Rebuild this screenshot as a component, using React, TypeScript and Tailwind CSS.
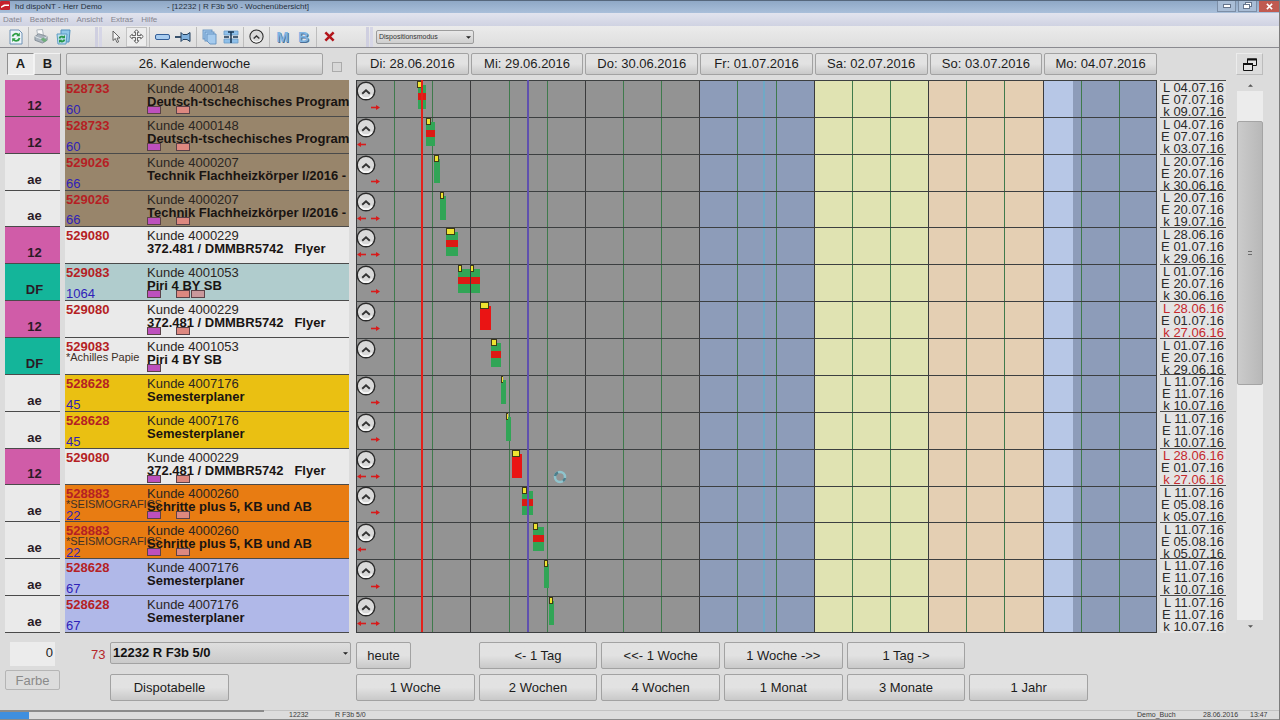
import type { ReactNode } from "react";
import clsx from "clsx";

type Bar = {
	x: number;
	w: number;
	flags: [number, number][];
	kind: "run" | "mixed" | "late";
};

type Job = {
	code: string;
	codeBg: string;
	bg: string;
	order: string;
	note?: string;
	count?: string;
	customer: string;
	title: string;
	swatches: string[];
	left?: boolean;
	right?: boolean;
	dates: [string, string, string];
	late?: boolean;
	bar: Bar;
};

const PINK = "bg-[#d05ca8]";
const TEAL = "bg-[#14b59a]";
const LIGHT = "bg-[#eaeaea]";
const BROWN = "bg-[#98856b]";
const YELLOW = "bg-[#eac012]";
const ORANGE = "bg-[#e87c12]";
const LILAC = "bg-[#b0b8e8]";

const VIOLET = "bg-[#bd50bd]";
const SALMON = "bg-[#dd8880]";
const ROSE = "bg-[#c9989c]";

const jobs: Job[] = [
	{ code: "12", codeBg: PINK, bg: BROWN, order: "528733", count: "60", customer: "Kunde 4000148", title: "Deutsch-tschechisches Program", swatches: [VIOLET, SALMON], right: true, dates: ["04.07.16", "07.07.16", "09.07.16"], bar: { x: 62, w: 8, flags: [[61, 5]], kind: "mixed" } },
	{ code: "12", codeBg: PINK, bg: BROWN, order: "528733", count: "60", customer: "Kunde 4000148", title: "Deutsch-tschechisches Program", swatches: [VIOLET, SALMON], left: true, dates: ["04.07.16", "07.07.16", "03.07.16"], bar: { x: 70, w: 9, flags: [[70, 5]], kind: "mixed" } },
	{ code: "ae", codeBg: LIGHT, bg: BROWN, order: "529026", count: "66", customer: "Kunde 4000207", title: "Technik Flachheizkörper I/2016 -", swatches: [], right: true, dates: ["20.07.16", "20.07.16", "30.06.16"], bar: { x: 78, w: 6, flags: [[78, 5]], kind: "run" } },
	{ code: "ae", codeBg: LIGHT, bg: BROWN, order: "529026", count: "66", customer: "Kunde 4000207", title: "Technik Flachheizkörper I/2016 -", swatches: [VIOLET, SALMON], left: true, right: true, dates: ["20.07.16", "20.07.16", "19.07.16"], bar: { x: 84, w: 6, flags: [[84, 4]], kind: "run" } },
	{ code: "12", codeBg: PINK, bg: LIGHT, order: "529080", customer: "Kunde 4000229", title: "372.481 / DMMBR5742   Flyer", swatches: [], left: true, right: true, dates: ["28.06.16", "01.07.16", "29.06.16"], bar: { x: 90, w: 12, flags: [[90, 9]], kind: "mixed" } },
	{ code: "DF", codeBg: TEAL, bg: "bg-[#b0cccd]", order: "529083", count: "1064", customer: "Kunde 4001053", title: "Piri 4 BY SB", swatches: [VIOLET, SALMON, ROSE], right: true, dates: ["01.07.16", "20.07.16", "30.06.16"], bar: { x: 102, w: 22, flags: [[102, 4], [114, 4]], kind: "mixed" } },
	{ code: "12", codeBg: PINK, bg: LIGHT, order: "529080", customer: "Kunde 4000229", title: "372.481 / DMMBR5742   Flyer", swatches: [VIOLET, SALMON], right: true, late: true, dates: ["28.06.16", "01.07.16", "27.06.16"], bar: { x: 124, w: 11, flags: [[124, 9]], kind: "late" } },
	{ code: "DF", codeBg: TEAL, bg: LIGHT, order: "529083", note: "*Achilles Papie", customer: "Kunde 4001053", title: "Piri 4 BY SB", swatches: [VIOLET], dates: ["01.07.16", "20.07.16", "29.06.16"], bar: { x: 135, w: 10, flags: [[135, 6]], kind: "mixed" } },
	{ code: "ae", codeBg: LIGHT, bg: YELLOW, order: "528628", count: "45", customer: "Kunde 4007176", title: "Semesterplaner", swatches: [], right: true, dates: ["11.07.16", "11.07.16", "10.07.16"], bar: { x: 145, w: 5, flags: [[145, 2]], kind: "run" } },
	{ code: "ae", codeBg: LIGHT, bg: YELLOW, order: "528628", count: "45", customer: "Kunde 4007176", title: "Semesterplaner", swatches: [], right: true, dates: ["11.07.16", "11.07.16", "10.07.16"], bar: { x: 150, w: 5, flags: [[150, 2]], kind: "run" } },
	{ code: "12", codeBg: PINK, bg: LIGHT, order: "529080", customer: "Kunde 4000229", title: "372.481 / DMMBR5742   Flyer", swatches: [VIOLET, SALMON], left: true, right: true, late: true, dates: ["28.06.16", "01.07.16", "27.06.16"], bar: { x: 156, w: 10, flags: [[156, 8]], kind: "late" } },
	{ code: "ae", codeBg: LIGHT, bg: ORANGE, order: "528883", note: "*SEISMOGRAFICS", count: "22", customer: "Kunde 4000260", title: "Schritte plus 5, KB und AB", swatches: [VIOLET, SALMON], right: true, dates: ["11.07.16", "05.08.16", "05.07.16"], bar: { x: 166, w: 11, flags: [[166, 5]], kind: "mixed" } },
	{ code: "ae", codeBg: LIGHT, bg: ORANGE, order: "528883", note: "*SEISMOGRAFICS", count: "22", customer: "Kunde 4000260", title: "Schritte plus 5, KB und AB", swatches: [VIOLET, SALMON], left: true, dates: ["11.07.16", "05.08.16", "05.07.16"], bar: { x: 177, w: 11, flags: [[177, 5]], kind: "mixed" } },
	{ code: "ae", codeBg: LIGHT, bg: LILAC, order: "528628", count: "67", customer: "Kunde 4007176", title: "Semesterplaner", swatches: [], right: true, dates: ["11.07.16", "11.07.16", "10.07.16"], bar: { x: 188, w: 5, flags: [[188, 4]], kind: "run" } },
	{ code: "ae", codeBg: LIGHT, bg: LILAC, order: "528628", count: "67", customer: "Kunde 4007176", title: "Semesterplaner", swatches: [], left: true, right: true, dates: ["11.07.16", "11.07.16", "10.07.16"], bar: { x: 193, w: 5, flags: [[193, 4]], kind: "run" } },
];

const days = ["Di: 28.06.2016", "Mi: 29.06.2016", "Do: 30.06.2016", "Fr: 01.07.2016", "Sa: 02.07.2016", "So: 03.07.2016", "Mo: 04.07.2016"];
const dayColors = ["#939393", "#939393", "#939393", "#8d9cb9", "#e0e3b2", "#e4cfb3", "#8d9cb9"];

const CHART_W = 801;
const CHART_H = 553;
const DAY_W = CHART_W / 7;
const ROW_H = CHART_H / jobs.length;

function PushButton({ children, className }: { children: ReactNode; className?: string }) {
	return (
		<button
			type="button"
			className={clsx(
				"flex items-center justify-center rounded-xs border border-[#a2a2a2] bg-linear-to-b from-[#e2e2e2] from-50% to-[#c9c9c9] whitespace-nowrap",
				className
			)}
		>
			{children}
		</button>
	);
}

function ToolButton({ label, pressed, children }: { label: string; pressed?: boolean; children: ReactNode }) {
	return (
		<button
			type="button"
			aria-label={label}
			className={clsx(
				"flex h-5 w-[21px] shrink-0 items-center justify-center",
				pressed && "border border-[#c4c4c4] bg-[#ededed]"
			)}
		>
			{children}
		</button>
	);
}

function Separator() {
	return (
		<div className="flex w-[5px] shrink-0 justify-center">
			<div className="h-5 w-px bg-[#bdbdbd]" />
		</div>
	);
}

function Grip() {
	return (
		<div className="flex h-5 w-[10px] shrink-0 gap-px">
			<div className="w-[3px] bg-[#cfcfe0]" />
			<div className="w-[3px] bg-[#d6d6e6]" />
		</div>
	);
}

function ClockIcon({ size }: { size: string }) {
	return (
		<svg viewBox="0 0 20 20" className={size} fill="none">
			<circle cx="10" cy="10" r="8.800" fill="#d9d9d9" stroke="#2b2b2b" strokeWidth="1.400" />
			<path d="M4 14a7.200 7.200 0 0 0 12 0" stroke="#f6f6f6" strokeWidth="1.800" />
			<path d="M6.200 12.800 10 9.300l3.800 3.500" stroke="#333" strokeWidth="1.900" />
		</svg>
	);
}

function TitleBar() {
	return (
		<header className="flex h-[13px] items-start border-t border-[#56677c] bg-linear-to-b from-[#8fa8c6] to-[#a9bfda] text-[8px] leading-[11px] text-[#26303c]">
			<svg viewBox="0 0 10 10" className="mr-[5px] size-[10px]">
				<rect width="10" height="9" rx="1" fill="#c5202c" />
				<path d="M1 5.500 4 3.500h5v1.500H5L1 7z" fill="#fff" />
			</svg>
			<span className="w-[152px]">hd dispoNT - Herr Demo</span>
			<span className="flex-1">- [12232 | R F3b 5/0 - Wochenübersicht]</span>
			<div className="flex gap-0.5">
				<button type="button" aria-label="Minimieren" className="flex h-[11px] w-[19px] items-center justify-center border border-t-0 border-[#7c8ea6] bg-[#a9bdd6]">
					<svg viewBox="0 0 8 4" className="h-1 w-2">
						<rect x=".5" y=".5" width="7" height="3" fill="#fff" stroke="#66758c" />
					</svg>
				</button>
				<button type="button" aria-label="Wiederherstellen" className="flex h-[11px] w-[19px] items-center justify-center border border-t-0 border-[#7c8ea6] bg-[#a9bdd6]">
					<svg viewBox="0 0 9 8" className="h-2 w-[9px]" fill="#fff" stroke="#66758c">
						<rect x="2.500" y=".5" width="6" height="4" />
						<rect x=".5" y="2.500" width="6" height="4" />
					</svg>
				</button>
				<button type="button" aria-label="Schließen" className="flex h-[11px] w-5 items-center justify-center bg-[#c05a50]">
					<svg viewBox="0 0 8 8" className="size-[7px]" stroke="#fff" strokeWidth="1.800">
						<path d="m1 1 6 6M7 1 1 7" />
					</svg>
				</button>
			</div>
		</header>
	);
}

function Toolbar() {
	return (
		<div className="flex h-[22px] items-center border-b border-[#8a8a90] bg-linear-to-b from-[#ebebeb] to-[#dedede] pl-[5px]">
			<ToolButton label="Aktualisieren">
				<svg viewBox="0 0 14 16" className="h-4 w-[14px]" fill="none">
					<path d="M1 1h9l3 3v11H1z" fill="#eef4fa" stroke="#6f92b5" />
					<path d="M3.500 7.500c.6-3 4.200-3.800 6-1.500" stroke="#2e9e44" strokeWidth="1.800" />
					<path d="M10.800 3.500v3.700H7.200z" fill="#2e9e44" />
					<path d="M10.500 9c-.6 3-4.200 3.800-6 1.500" stroke="#2e9e44" strokeWidth="1.800" />
					<path d="M3.200 13V9.300h3.600z" fill="#2e9e44" />
				</svg>
			</ToolButton>
			<Separator />
			<ToolButton label="Drucken">
				<svg viewBox="0 0 16 16" className="size-[15px]">
					<path d="m3 1 6-.5 1 6-6 .5z" fill="#fafafa" stroke="#9aa4ae" strokeWidth=".8" />
					<path d="m1 8 4-3 9 3v4l-5 3-8-3z" fill="#a9b3bd" stroke="#76808a" strokeWidth=".8" />
					<path d="m1 8 8 3 5-3" fill="none" stroke="#dfe5ea" />
					<path d="m7 11 3-2 4 3-3 2z" fill="#6fae7c" />
				</svg>
			</ToolButton>
			<ToolButton label="Druckvorschau">
				<svg viewBox="0 0 16 16" className="size-4" fill="none">
					<path d="M6 1h9l-1 12h-3V8H6z" fill="#8fc7e8" stroke="#4e8fbb" />
					<path d="M2 5h10l-1 10H3z" fill="#bfe0ee" stroke="#5c9cc4" />
					<path d="M4.500 9.500c.5-2 3-2.500 4.300-1M9.500 10.500c-.6 2.200-3 2.600-4.400 1" stroke="#27984a" strokeWidth="1.900" />
					<path d="M10 6v3.200H6.800zM4 14v-3.200h3.200z" fill="#27984a" />
				</svg>
			</ToolButton>
			<div className="w-[22px]" />
			<Grip />
			<ToolButton label="Auswahl">
				<svg viewBox="0 0 10 14" className="h-[14px] w-[10px]">
					<path d="M2 1v9.500l2.300-2 1.700 4 1.600-.7L6 8h3z" fill="#f5f5f5" stroke="#555" strokeWidth=".9" />
				</svg>
			</ToolButton>
			<ToolButton label="Verschieben" pressed>
				<svg viewBox="0 0 16 16" className="size-[15px] shrink-0">
					<path
						d="m8 .8 2.500 2.700H9v3.500h3.500V5.500L15.200 8l-2.700 2.500V9H9v3.500h1.500L8 15.200l-2.500-2.700H7V9H3.500v1.500L.8 8l2.700-2.500V7H7V3.500H5.500z"
						fill="#fff"
						stroke="#444"
						strokeWidth=".9"
					/>
				</svg>
			</ToolButton>
			<Separator />
			<ToolButton label="Balken">
				<svg viewBox="0 0 15 6" className="h-1.5 w-[15px]">
					<rect x=".5" y=".5" width="14" height="5" rx="1.500" fill="#a9cdf0" stroke="#345f98" />
				</svg>
			</ToolButton>
			<ToolButton label="Fixieren">
				<svg viewBox="0 0 17 12" className="h-3 w-[17px]" stroke="#24405e">
					<path d="M0 6h6" strokeWidth="1.800" />
					<path d="M6 1.500v9l2-2h4l3 2v-9l-3 2H8z" fill="#7fb0dc" />
				</svg>
			</ToolButton>
			<Separator />
			<ToolButton label="Kopieren">
				<svg viewBox="0 0 16 16" className="size-4" fill="#a5cbee" stroke="#6391c0" strokeWidth=".9">
					<rect x="1" y="1" width="9" height="9" />
					<rect x="3" y="3" width="9" height="9" />
					<path d="M5 5h9v10H8l-3-3z" />
				</svg>
			</ToolButton>
			<ToolButton label="Teilen">
				<svg viewBox="0 0 16 14" className="h-[14px] w-4">
					<path d="M1 1h14v4H1zM1 9h14v4H1z" fill="#8fc0ea" stroke="#6a9cc9" strokeWidth=".8" />
					<path d="M8 2v11M1 7h5M15 7h-5M5 2h6" stroke="#173452" strokeWidth="1.500" />
				</svg>
			</ToolButton>
			<Separator />
			<ToolButton label="Uhrzeit">
				<ClockIcon size="size-[15px]" />
			</ToolButton>
			<Separator />
			<ToolButton label="Maschine">
				<span className="text-[15px] leading-none font-bold text-[#7eb4e2] text-shadow-[1px_1px_0_#4a6f96]">M</span>
			</ToolButton>
			<ToolButton label="Belegung">
				<span className="text-[15px] leading-none font-bold text-[#7eb4e2] text-shadow-[1px_1px_0_#4a6f96]">B</span>
			</ToolButton>
			<Separator />
			<ToolButton label="Löschen">
				<svg viewBox="0 0 12 12" className="size-[11px]" stroke="#b3161c" strokeWidth="2.800">
					<path d="m1.500 1.500 9 9M10.500 1.500l-9 9" />
				</svg>
			</ToolButton>
			<div className="w-[26px]" />
			<Grip />
			<div className="relative">
				<select
					aria-label="Modus"
					className="block h-[14px] w-[98px] appearance-none rounded-xs border border-[#9c9c9c] bg-linear-to-b from-[#e8e8e8] to-[#cfcfcf] pl-0.5 text-[7px] leading-3 text-[#333]"
				>
					<option>Dispositionsmodus</option>
				</select>
				<svg viewBox="0 0 6 3" className="pointer-events-none absolute top-[6px] right-[3px] h-[3px] w-[5px]">
					<path d="M0 0h6L3 3z" fill="#222" />
				</svg>
			</div>
		</div>
	);
}

function HeaderRow() {
	return (
		<div className="flex h-8 items-center pr-4 pl-[7px]">
			<div className="flex h-[22px] w-[59px] shrink-0 font-bold">
				<button type="button" className="w-[27px] border border-[#8f8f8f] border-r-[#f4f4f4] border-b-[#f4f4f4] bg-[#ebebeb]">
					A
				</button>
				<button type="button" className="w-[27px] border border-[#f2f2f2] border-r-[#8f8f8f] border-b-[#8f8f8f] bg-[#dcdcdc]">
					B
				</button>
			</div>
			<PushButton className="h-[22px] w-[257px] shrink-0">26. Kalenderwoche</PushButton>
			<div className="flex w-[33px] shrink-0 items-center pt-1.5 pl-[9px]">
				<input type="checkbox" aria-label="Woche fixieren" className="size-[10px] appearance-none border border-[#ababab] bg-[#d8d8d8]" />
			</div>
			<div className="grid min-w-0 flex-1 grid-cols-7 gap-0.5">
				{days.map((day) => (
					<PushButton key={day} className="h-[22px]">
						{day}
					</PushButton>
				))}
			</div>
			<div className="flex w-[106px] shrink-0 justify-end">
				<button type="button" aria-label="Fenster" className="flex h-[22px] w-[27px] items-center justify-center border border-[#ececec] border-r-[#bcbcbc] border-b-[#bcbcbc]">
					<svg viewBox="0 0 14 13" className="h-[13px] w-[14px]" fill="#e4e4e4" stroke="#111">
						<path d="M4.500 1h9v6.500h-9z" />
						<path d="M4 1.500h10" strokeWidth="2" />
						<path d="M.5 6h9v6.500h-9z" />
						<path d="M0 6h10" strokeWidth="2" />
					</svg>
				</button>
			</div>
		</div>
	);
}

function JobRow({ job }: { job: Job }) {
	return (
		<div className={clsx("flex min-h-0 flex-1 basis-0 border-b border-[#4a4a4a] pl-px leading-[13px] whitespace-pre", job.bg)}>
			<div className="flex w-[81px] shrink-0 flex-col pt-0.5">
				<span className="font-bold text-[#b51f24]">{job.order}</span>
				<span className="h-[9px] text-[11px] leading-[9px] text-[#3d3028]">{job.note}</span>
				<span className="text-[#2f22b8]">{job.count}</span>
			</div>
			<div className="min-w-0 flex-1 pt-0.5">
				<div className="text-[#2a2522]">{job.customer}</div>
				<div className="font-bold text-[#191412]">{job.title}</div>
				<div className="-mt-0.5 flex">
					{job.swatches.map((color, i) => (
						<div key={i} className={clsx("h-2 w-[14px] border border-[#5b4248]", color, i === 1 && "ml-[15px]", i === 2 && "ml-px")} />
					))}
				</div>
			</div>
		</div>
	);
}

function Arrow({ flip }: { flip?: boolean }) {
	return (
		<svg viewBox="0 0 9 5" className={clsx("h-[5px] w-[9px]", flip && "rotate-180")}>
			<path d="M0 2.500h6" stroke="#d81b1b" strokeWidth="1.600" />
			<path d="M5 0v5l4-2.500z" fill="#d81b1b" />
		</svg>
	);
}

function Bars() {
	return (
		<>
			{jobs.map(({ bar }, i) => {
				const y = Math.round(i * ROW_H);
				return (
					<g key={i}>
						<rect x={bar.x} y={y + 5} width={bar.w} height={24} fill={bar.kind === "late" ? "#ea1414" : "#31a556"} />
						{bar.kind === "mixed" && <rect x={bar.x} y={y + 13} width={bar.w} height={7} fill="#dc1a14" />}
						{bar.flags.map(([x, w]) => (
							<g key={x}>
								<rect x={x} y={y + 1} width={w} height={7} fill="#3f3b18" />
								<rect x={x + 1} y={y + 2} width={Math.max(w - 2, 1)} height={5} fill="#efe431" />
							</g>
						))}
					</g>
				);
			})}
		</>
	);
}

function Chart() {
	return (
		<div className="relative min-w-0 flex-1">
			<svg viewBox={`0 0 ${CHART_W} ${CHART_H}`} preserveAspectRatio="none" shapeRendering="crispEdges" className="absolute inset-0 h-full w-full">
				{dayColors.map((color, i) => (
					<rect key={i} x={i * DAY_W} y="0" width={DAY_W + 1} height={CHART_H} fill={color} />
				))}
				<rect x={6 * DAY_W} y="0" width="30" height={CHART_H} fill="#b7c7e6" />
				{days.map((day, i) => (
					<g key={day}>
						<rect x={Math.round(i * DAY_W + DAY_W / 3)} y="0" width="1" height={CHART_H} fill="#3f7a4c" />
						<rect x={Math.round(i * DAY_W + (DAY_W * 2) / 3)} y="0" width="1" height={CHART_H} fill="#3f7a4c" />
					</g>
				))}
				<rect x="407" y="0" width="2" height={CHART_H} fill="#6fa9c6" />
				<Bars />
				{days.map((day, i) => (
					<rect key={day} x={Math.round(i * DAY_W)} y="0" width="1" height={CHART_H} fill="#3a3a3c" />
				))}
				{jobs.map((_, i) => (
					<rect key={i} x="0" y={Math.round(i * ROW_H)} width={CHART_W} height="1" fill="#3c3f40" />
				))}
				<rect x="65" y="0" width="2" height={CHART_H} fill="#e3201a" />
				<rect x="171" y="0" width="2" height={CHART_H} fill="#5f50ae" />
				<rect x="0" y={CHART_H - 1} width={CHART_W} height="1" fill="#3c3f40" />
				<rect x={CHART_W - 1} y="0" width="1" height={CHART_H} fill="#3c3f40" />
				<g fill="none" strokeWidth="2.500" shapeRendering="auto">
					<circle cx="204" cy="397" r="5" stroke="#8fc4cd" />
					<path d="M199 396a5 5 0 0 1 3-3.500M209 398a5 5 0 0 1-2 3" stroke="#4d7f8c" />
				</g>
			</svg>
			<div className="relative flex h-full w-6 flex-col">
				{jobs.map((job, i) => (
					<div key={i} className="min-h-0 flex-1 basis-0 pt-px">
						<ClockIcon size="size-5" />
						<div className="flex h-[13px] w-6 items-center justify-between pl-px">
							<div>{job.left && <Arrow flip />}</div>
							<div>{job.right && <Arrow />}</div>
						</div>
					</div>
				))}
			</div>
		</div>
	);
}

function ScrollBar() {
	return (
		<div className="ml-[11px] flex w-[26px] shrink-0 flex-col items-center">
			<svg viewBox="0 0 6 3" className="my-1 h-[3px] w-[5px]">
				<path d="M0 3h6L3 0z" fill="#555" />
			</svg>
			<div className="flex w-full flex-1 flex-col bg-[#ececec] pt-[30px]">
				<div className="flex h-[53%] items-center justify-center rounded-xs border border-[#a4a4a4] bg-linear-to-r from-[#cbcbcb] to-[#b8b8b8]">
					<div className="size-1 border-y border-[#6b6b6b]" />
				</div>
			</div>
			<svg viewBox="0 0 6 3" className="my-[5px] h-[3px] w-[5px]">
				<path d="M0 0h6L3 3z" fill="#555" />
			</svg>
		</div>
	);
}

function Planner() {
	return (
		<main className="flex min-h-0 flex-1 pr-4 pl-[5px]">
			<div className="mr-[5px] flex w-[55px] shrink-0 flex-col">
				{jobs.map((job, i) => (
					<div key={i} className={clsx("flex min-h-0 flex-1 basis-0 items-end justify-center border-b border-[#4a4a4a] pb-0.5 pl-1 leading-4 font-bold text-[#2a1a26]", job.codeBg)}>
						{job.code}
					</div>
				))}
			</div>
			<div className="mr-[7px] flex w-[284px] shrink-0 flex-col">
				{jobs.map((job, i) => (
					<JobRow key={i} job={job} />
				))}
			</div>
			<Chart />
			<div className="ml-[3px] flex w-[66px] shrink-0 flex-col border-t border-[#4a4a4a]">
				{jobs.map((job, i) => (
					<div key={i} className="flex min-h-0 flex-1 basis-0 flex-col border-b border-[#4a4a4a] bg-[#e4e4e4] pt-px pr-0.5 text-right leading-3 text-[#2b2b2b] last:border-transparent">
						<span className={clsx(job.late && "text-[#c4282c]")}>L {job.dates[0]}</span>
						<span>E {job.dates[1]}</span>
						<span className={clsx(job.late && "text-[#c4282c]")}>k {job.dates[2]}</span>
					</div>
				))}
			</div>
			<ScrollBar />
		</main>
	);
}

function Footer() {
	return (
		<div className="flex pt-[9px] pb-[9px] pl-[5px]">
			<div className="flex w-[55px] shrink-0 flex-col">
				<input
					aria-label="Anzahl"
					defaultValue="0"
					className="ml-[5px] h-6 w-[45px] bg-[#ececec] pr-0.5 pb-1 text-right text-[#222]"
				/>
				<button type="button" disabled className="mt-1 h-5 rounded-xs border border-[#b5b5b5] text-[#8a8a8a]">
					Farbe
				</button>
			</div>
			<div className="ml-[31px] flex w-[260px] shrink-0 flex-col gap-1.5">
				<div className="flex h-[26px] items-start">
					<label htmlFor="machine" className="w-[19px] shrink-0 pt-1 leading-[18px] text-[#b5262a]">
						73
					</label>
					<div className="relative flex-1">
						<select
							id="machine"
							className="block h-[22px] w-full appearance-none rounded-xs border border-[#a2a2a2] bg-linear-to-b from-[#dedede] to-[#cacaca] pl-0.5 font-bold text-[#111]"
						>
							<option>12232 R F3b 5/0</option>
						</select>
						<svg viewBox="0 0 6 3" className="pointer-events-none absolute top-[10px] right-[3px] h-[3px] w-[5px]">
							<path d="M0 0h6L3 3z" fill="#222" />
						</svg>
					</div>
				</div>
				<PushButton className="ml-[19px] h-[27px] w-[119px]">Dispotabelle</PushButton>
			</div>
			<div className="ml-[5px] grid max-w-[732px] flex-1 grid-cols-6 grid-rows-[27px_27px] gap-x-1 gap-y-[5px]">
				<PushButton className="w-[55px]">heute</PushButton>
				<PushButton>&lt;- 1 Tag</PushButton>
				<PushButton>&lt;&lt;- 1 Woche</PushButton>
				<PushButton>1 Woche -&gt;&gt;</PushButton>
				<PushButton>1 Tag -&gt;</PushButton>
				<div />
				<PushButton>1 Woche</PushButton>
				<PushButton>2 Wochen</PushButton>
				<PushButton>4 Wochen</PushButton>
				<PushButton>1 Monat</PushButton>
				<PushButton>3 Monate</PushButton>
				<PushButton>1 Jahr</PushButton>
			</div>
		</div>
	);
}

function StatusBar() {
	return (
		<footer className="flex h-[10px] shrink-0 items-end border-b border-[#8a8a8a] text-[7px] leading-[8px] text-[#3a3a3a]">
			<div className="h-full w-[264px] border-t-2 border-[#8b8b8b]">
				<div className="h-[7px] w-[29px] bg-[#3f8fdf]" />
			</div>
			<div className="flex h-full flex-1 items-end border-t border-[#c2c2c2] pl-[25px]">
				<span className="w-[46px]">12232</span>
				<span className="flex-1">R F3b 5/0</span>
				<span className="w-[66px]">Demo_Buch</span>
				<span className="w-[47px]">28.06.2016</span>
				<span className="w-[29px]">13:47</span>
			</div>
		</footer>
	);
}

export default function App() {
	return (
		<div className="flex min-h-screen flex-col border-r border-[#7d7d7d] bg-[#dcdcdc] font-['Liberation_Sans',Arial,sans-serif] text-[13px] text-[#1c1c1c]">
			<TitleBar />
			<nav className="flex h-[13px] items-center gap-2 bg-linear-to-b from-[#e2e4ee] to-[#cfd2e2] pl-[3px] text-[8px] text-[#85858f]">
				<a href="#datei">Datei</a>
				<a href="#bearbeiten">Bearbeiten</a>
				<a href="#ansicht">Ansicht</a>
				<a href="#extras">Extras</a>
				<a href="#hilfe">Hilfe</a>
			</nav>
			<Toolbar />
			<HeaderRow />
			<Planner />
			<Footer />
			<StatusBar />
		</div>
	);
}
